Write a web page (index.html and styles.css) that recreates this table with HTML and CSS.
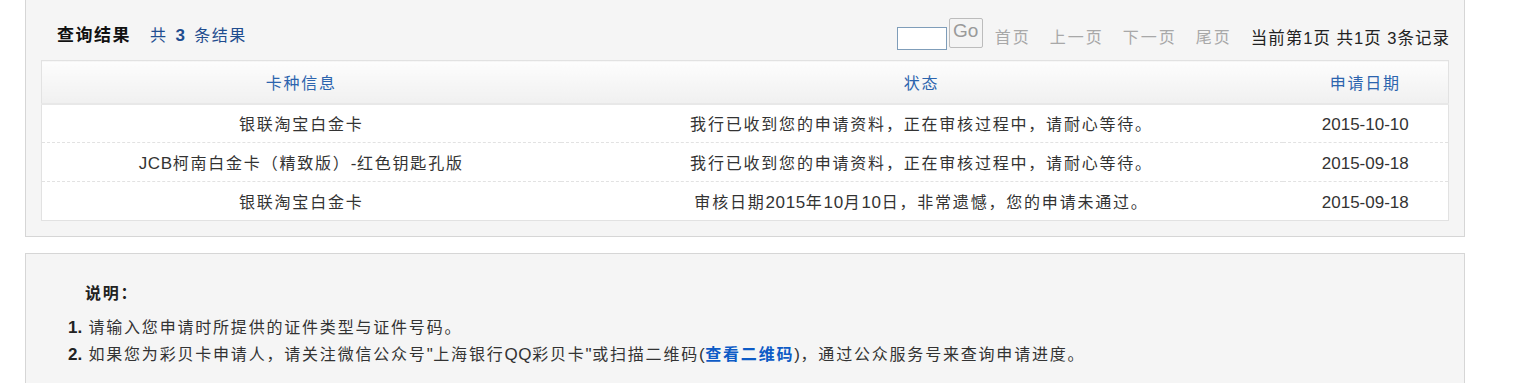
FILE: index.html
```html
<!DOCTYPE html>
<html lang="zh-CN">
<head>
<meta charset="utf-8">
<title>查询结果</title>
<link rel="stylesheet" href="styles.css">
</head>
<body>
<div class="page">
  <section class="panel result">
    <div class="result-head">
      <div class="title">
        <span class="title-main">查询结果</span>
        <span class="title-count">共 <b>3</b> 条结果</span>
      </div>
      <div class="pager">
        <input class="pager-input" type="text">
        <button class="pager-go" type="button">Go</button>
        <span class="pager-link">首页</span>
        <span class="pager-link">上一页</span>
        <span class="pager-link">下一页</span>
        <span class="pager-link">尾页</span>
        <span class="pager-info">当前第1页 共1页 3条记录</span>
      </div>
    </div>
    <table class="grid">
      <thead>
        <tr>
          <th class="c1">卡种信息</th>
          <th class="c2">状态</th>
          <th class="c3">申请日期</th>
        </tr>
      </thead>
      <tbody>
        <tr>
          <td>银联淘宝白金卡</td>
          <td>我行已收到您的申请资料，正在审核过程中，请耐心等待。</td>
          <td class="date">2015-10-10</td>
        </tr>
        <tr>
          <td><span class="lat">JCB</span>柯南白金卡（精致版）<span class="lat">-</span>红色钥匙孔版</td>
          <td>我行已收到您的申请资料，正在审核过程中，请耐心等待。</td>
          <td class="date">2015-09-18</td>
        </tr>
        <tr>
          <td>银联淘宝白金卡</td>
          <td>审核日期<span class="lat">2015</span>年<span class="lat">10</span>月<span class="lat">10</span>日，非常遗憾，您的申请未通过。</td>
          <td class="date">2015-09-18</td>
        </tr>
      </tbody>
    </table>
  </section>

  <section class="panel notes">
    <h3 class="notes-title">说明：</h3>
    <ol class="notes-list">
      <li><b class="num">1.</b> 请输入您申请时所提供的证件类型与证件号码。</li>
      <li><b class="num">2.</b> 如果您为彩贝卡申请人，请关注微信公众号<span class="lat">"</span>上海银行<span class="lat">QQ</span>彩贝卡<span class="lat">"</span>或扫描二维码<span class="lat">(</span><a class="qr-link" href="#">查看二维码</a><span class="lat">)</span>，通过公众服务号来查询申请进度。</li>
    </ol>
  </section>
</div>
</body>
</html>
```

FILE: styles.css
```css
* { box-sizing: border-box; }

html, body {
  margin: 0;
  padding: 0;
  background: #ffffff;
}

body {
  font-family: "Liberation Sans", Arial, "Noto Sans CJK SC", sans-serif;
  font-size: 16px;
  letter-spacing: 1.8px;
  color: #333333;
}

.page {
  width: 1465px;
  padding-left: 25px;
}

.panel {
  background: #f5f5f5;
  border: 1px solid #d6d6d6;
}

.result {
  border-top: 0;
  padding: 0 15px 15px 15px;
}

.result-head {
  display: flex;
  justify-content: space-between;
  align-items: flex-start;
  height: 60px;
}

.title {
  padding-top: 21px;
  padding-left: 16px;
  display: flex;
  align-items: baseline;
}

.title-main {
  font-size: 17px;
  font-weight: bold;
  color: #111111;
  letter-spacing: 1.5px;
}

.title-count {
  margin-left: 19px;
  color: #1f4d8f;
  font-size: 16px;
  letter-spacing: 1.5px;
}

.title-count b {
  font-size: 17px;
  margin: 0 2px;
  color: #1f4d8f;
}

.pager {
  display: flex;
  align-items: flex-end;
  padding-top: 18px;
}

.pager-input {
  width: 50px;
  height: 23px;
  border: 1px solid #7f9db9;
  background: #ffffff;
  margin: 0 2px 0 0;
  padding: 0;
  position: relative;
  top: 2px;
}

.pager-go {
  width: 34px;
  height: 30px;
  border: 1px solid #bcbcbc;
  border-radius: 2px;
  background: #f4f4f4;
  color: #9a9a9a;
  font-family: "Liberation Sans", Arial, sans-serif;
  font-size: 19px;
  letter-spacing: 0;
  padding: 0 0 4px 0;
  margin-right: 12px;
}

.pager-link {
  color: #a8a8a8;
  margin-right: 19px;
  line-height: 20px;
  letter-spacing: 2px;
}

.pager-info {
  color: #222222;
  line-height: 20px;
  letter-spacing: 1px;
  font-size: 16.5px;
  margin-right: -1px;
}

.grid {
  width: 100%;
  border-collapse: collapse;
  background: #ffffff;
  border: 1px solid #e2e2e2;
  table-layout: fixed;
}

.grid th {
  height: 43px;
  font-weight: normal;
  color: #2c64ae;
  background: linear-gradient(#fdfdfd, #f0f0f0);
  border-bottom: 2px solid #e8e8e8;
  text-align: center;
  padding: 0;
}

.grid th.c1 { width: 519px; }
.grid th.c2 { width: 722px; }

.grid td {
  height: 39px;
  text-align: center;
  padding: 0;
  border-top: 1px dashed #e2e2e2;
}

.grid tbody tr:first-child td {
  border-top: 1px dashed #dcdcdc;
}

.grid td.date {
  font-size: 17px;
  letter-spacing: 0;
  padding-top: 3px;
}

.lat {
  font-size: 17px;
  letter-spacing: 0.6px;
}

.notes {
  margin-top: 16px;
  padding: 26px 0 20px 0;
  border-bottom: 0;
  height: 140px;
}

.notes-title {
  margin: 0 0 10px 59px;
  font-size: 16px;
  font-weight: bold;
  color: #222222;
}

.notes-list {
  list-style: none;
  margin: 0;
  padding: 0 0 0 42px;
}

.notes-list li {
  line-height: 27px;
}

.num {
  font-size: 17px;
  letter-spacing: 0;
  color: #222222;
}

.qr-link {
  color: #0d5bc6;
  font-weight: bold;
  text-decoration: none;
}
```
